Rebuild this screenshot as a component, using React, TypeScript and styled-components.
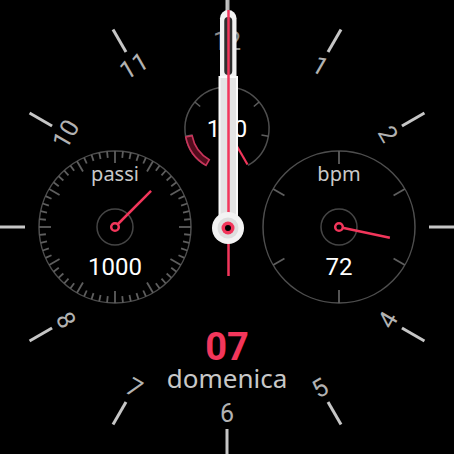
import React from "react";
import styled, { createGlobalStyle } from "styled-components";

const RED = "#f2365b";
const CX = 227;
const CY = 227;

const GlobalStyle = createGlobalStyle`
  html, body { margin: 0; padding: 0; background: #000; }
  #root { width: 454px; height: 454px; }
`;

const Face = styled.div`
  position: relative;
  width: 454px;
  height: 454px;
  background: #000;
  overflow: hidden;
  font-family: Roboto, "Noto Sans", sans-serif;
`;

const Layer = styled.svg`
  position: absolute;
  left: 0;
  top: 0;
  width: 454px;
  height: 454px;
  pointer-events: none;
`;

const Numeral = styled.span<{ $x: number; $y: number; $rot: number; $dim?: boolean }>`
  position: absolute;
  left: ${(p) => p.$x}px;
  top: ${(p) => p.$y}px;
  transform: translate(-50%, -50%) rotate(${(p) => p.$rot}deg);
  font-family: Roboto, sans-serif;
  font-size: 25px;
  line-height: 1;
  color: ${(p) => (p.$dim ? "#8a8a8a" : "#b2b2b2")};
  white-space: nowrap;
`;

const Subdial = styled.div<{ $cx: number; $cy: number; $size: number }>`
  position: absolute;
  left: ${(p) => p.$cx - p.$size / 2}px;
  top: ${(p) => p.$cy - p.$size / 2}px;
  width: ${(p) => p.$size}px;
  height: ${(p) => p.$size}px;
`;

const DialArt = styled.svg`
  position: absolute;
  inset: 0;
  width: 100%;
  height: 100%;
`;

const Readout = styled.div`
  position: relative;
  height: 100%;
  box-sizing: border-box;
  padding: 16.5px 0 28px;
  display: flex;
  flex-direction: column;
  justify-content: space-between;
  align-items: center;
`;

const Label = styled.span`
  font-family: "Noto Sans", sans-serif;
  font-size: 20px;
  line-height: 20px;
  color: #c9c9c9;
`;

const Value = styled.span`
  font-family: Roboto, sans-serif;
  font-size: 24px;
  line-height: 24px;
  color: #ffffff;
`;

const Center = styled.div`
  position: relative;
  height: 100%;
  display: flex;
  align-items: center;
  justify-content: center;
`;

const DateBlock = styled.div`
  position: absolute;
  left: 0;
  right: 0;
  top: 330px;
  display: flex;
  flex-direction: column;
  align-items: center;
  gap: 1px;
`;

const Day = styled.span`
  font-family: Roboto, sans-serif;
  font-weight: 700;
  font-size: 38px;
  line-height: 34px;
  color: ${RED};
`;

const Weekday = styled.span`
  font-family: "Noto Sans", sans-serif;
  font-size: 26px;
  line-height: 26px;
  color: #c8c8c8;
`;

const rad = (d: number) => (d * Math.PI) / 180;
const pt = (cx: number, cy: number, r: number, a: number) => [
  cx + r * Math.sin(rad(a)),
  cy - r * Math.cos(rad(a)),
];

function arcPath(cx: number, cy: number, r: number, a0: number, a1: number) {
  const [x0, y0] = pt(cx, cy, r, a0);
  const [x1, y1] = pt(cx, cy, r, a1);
  const large = Math.abs(a1 - a0) > 180 ? 1 : 0;
  return `M ${x0} ${y0} A ${r} ${r} 0 ${large} 1 ${x1} ${y1}`;
}

function bandPath(cx: number, cy: number, r0: number, r1: number, a0: number, a1: number) {
  const [ax, ay] = pt(cx, cy, r1, a0);
  const [bx, by] = pt(cx, cy, r1, a1);
  const [cx2, cy2] = pt(cx, cy, r0, a1);
  const [dx, dy] = pt(cx, cy, r0, a0);
  return `M ${ax} ${ay} A ${r1} ${r1} 0 0 1 ${bx} ${by} L ${cx2} ${cy2} A ${r0} ${r0} 0 0 0 ${dx} ${dy} Z`;
}

const numerals = [
  { n: "12", a: 0, rot: 0 },
  { n: "1", a: 30, rot: 30 },
  { n: "2", a: 60, rot: 60 },
  { n: "4", a: 120, rot: -60 },
  { n: "5", a: 150, rot: -30 },
  { n: "6", a: 180, rot: 0 },
  { n: "7", a: 210, rot: 30 },
  { n: "8", a: 240, rot: 60 },
  { n: "10", a: 300, rot: -60 },
  { n: "11", a: 330, rot: -30 },
];

function Hub({ r }: { r: number }) {
  return <circle cx={0} cy={0} r={r} fill="#000" stroke={RED} strokeWidth={2.5} />;
}

function StepsDial() {
  const ticks = Array.from({ length: 60 }, (_, i) => i);
  const [hx, hy] = pt(0, 0, 51, 45);
  return (
    <Subdial $cx={115} $cy={227} $size={160}>
      <DialArt viewBox="-80 -80 160 160">
        <circle r={76} fill="none" stroke="#4e4e4e" strokeWidth={1.5} />
        {ticks.map((i) => {
          const major = i % 5 === 0;
          const [x0, y0] = pt(0, 0, major ? 64 : 69.5, i * 6);
          const [x1, y1] = pt(0, 0, 76, i * 6);
          return <line key={i} x1={x0} y1={y0} x2={x1} y2={y1} stroke="#5e5e5e" strokeWidth={1.8} />;
        })}
        <circle r={18} fill="none" stroke="#454545" strokeWidth={1.5} />
        <line x1={0} y1={0} x2={hx} y2={hy} stroke={RED} strokeWidth={2.5} />
        <Hub r={3.8} />
      </DialArt>
      <Readout>
        <Label>passi</Label>
        <Value>1000</Value>
      </Readout>
    </Subdial>
  );
}

function HeartDial() {
  const ticks = [0, 60, 120, 180, 240, 300];
  const [hx, hy] = pt(0, 0, 52, 102);
  return (
    <Subdial $cx={339} $cy={227} $size={160}>
      <DialArt viewBox="-80 -80 160 160">
        <circle r={76} fill="none" stroke="#4e4e4e" strokeWidth={1.5} />
        {ticks.map((a) => {
          const [x0, y0] = pt(0, 0, 63, a);
          const [x1, y1] = pt(0, 0, 76, a);
          return <line key={a} x1={x0} y1={y0} x2={x1} y2={y1} stroke="#5e5e5e" strokeWidth={1.8} />;
        })}
        <circle r={18} fill="none" stroke="#454545" strokeWidth={1.5} />
        <line x1={0} y1={0} x2={hx} y2={hy} stroke={RED} strokeWidth={2.5} />
        <Hub r={3.8} />
      </DialArt>
      <Readout>
        <Label>bpm</Label>
        <Value>72</Value>
      </Readout>
    </Subdial>
  );
}

function BatteryDial() {
  const ticks = [-100, -50, 0, 50, 100];
  const [nx, ny] = pt(0, 0, 41, 150);
  return (
    <Subdial $cx={227} $cy={129} $size={100}>
      <DialArt viewBox="-50 -50 100 100">
        <path d={arcPath(0, 0, 42, -150, 150)} fill="none" stroke="#4e4e4e" strokeWidth={1.5} />
        {ticks.map((a) => {
          const [x0, y0] = pt(0, 0, 35, a);
          const [x1, y1] = pt(0, 0, 42, a);
          return <line key={a} x1={x0} y1={y0} x2={x1} y2={y1} stroke="#5e5e5e" strokeWidth={1.6} />;
        })}
        <path d={bandPath(0, 0, 35.5, 42, -150, -101)} fill="#520b1c" stroke="#c8345a" strokeWidth={1.6} />
        <line x1={0} y1={0} x2={nx} y2={ny} stroke={RED} strokeWidth={2.2} />
      </DialArt>
      <Center>
        <Value>100</Value>
      </Center>
    </Subdial>
  );
}

export default function App() {
  return (
    <>
      <GlobalStyle />
      <Face>
        <Layer viewBox="0 0 454 454">
          {Array.from({ length: 12 }, (_, i) => {
            const [x0, y0] = pt(CX, CY, 202, i * 30);
            const [x1, y1] = pt(CX, CY, 228, i * 30);
            return <line key={i} x1={x0} y1={y0} x2={x1} y2={y1} stroke="#c6c6c6" strokeWidth={3} />;
          })}
        </Layer>
        {numerals.map(({ n, a, rot }) => {
          const [x, y] = pt(CX, CY, 186, a);
          return (
            <Numeral key={n} $x={x} $y={y} $rot={rot} $dim={n === "12"}>
              {n}
            </Numeral>
          );
        })}
        <StepsDial />
        <HeartDial />
        <BatteryDial />
        <DateBlock>
          <Day>07</Day>
          <Weekday>domenica</Weekday>
        </DateBlock>
        <Layer viewBox="0 0 454 454">
          <rect x={220} y={10} width={16.5} height={218} rx={8.25} fill="#f2f2f2" />
          <rect x={224.25} y={17} width={8} height={58} rx={4} fill="#2e2e2e" />
          <rect x={219.5} y={77} width={17.5} height={151} fill="#e4e4e4" stroke="#fafafa" strokeWidth={2} />
          <line x1={228.5} y1={0} x2={228.5} y2={10} stroke="#b0b0b0" strokeWidth={2} />
          <line x1={228.5} y1={10} x2={228.5} y2={276} stroke={RED} strokeWidth={2.5} />
          <circle cx={228} cy={228} r={16} fill="#f3f3f3" />
          <circle cx={228} cy={228} r={10.5} fill="#dedede" />
          <circle cx={228} cy={228} r={6.5} fill={RED} />
          <circle cx={228} cy={228} r={3} fill="#000" />
        </Layer>
      </Face>
    </>
  );
}
